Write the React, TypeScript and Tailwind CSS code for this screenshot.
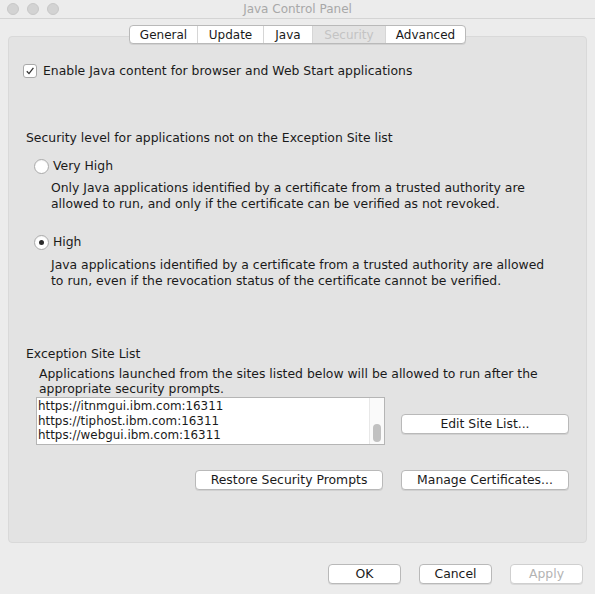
const TABS = [
  { label: 'General', w: 'w-[67px]' },
  { label: 'Update', w: 'w-[66px]' },
  { label: 'Java', w: 'w-[49px]' },
  { label: 'Security', w: 'w-[73px]', active: true },
  { label: 'Advanced', w: 'w-[80px]' },
];

const SITES = [
  'https://itnmgui.ibm.com:16311',
  'https://tiphost.ibm.com:16311',
  'https://webgui.ibm.com:16311',
];

function Button({ label, w, disabled }: { label: string; w: string; disabled?: boolean }) {
  return (
    <div
      className={`${w} h-[20px] rounded-[4px] border border-[#b9b9b9] bg-white shadow-[0_1px_0_rgba(0,0,0,0.08)] flex items-center justify-center text-[12.4px] leading-none ${
        disabled ? 'text-[#b3b3b3] border-[#cfcfcf]' : 'text-[#1a1a1a]'
      }`}
    >
      {label}
    </div>
  );
}

function Radio({ checked }: { checked?: boolean }) {
  return (
    <div className="w-[15px] h-[15px] rounded-full border border-[#a9a9a9] bg-white flex items-center justify-center shadow-[inset_0_1px_1px_rgba(0,0,0,0.05)]">
      {checked && <div className="w-[5px] h-[5px] rounded-full bg-[#2b2b2b]" />}
    </div>
  );
}

export default function App() {
  return (
    <div className="w-[595px] h-[594px] bg-[#ececec] flex flex-col text-[#1a1a1a] font-['DejaVu_Sans',sans-serif] text-[12.4px] overflow-hidden">
      {/* Title bar */}
      <div className="h-[19px] border-b border-[#d4d4d4] grid grid-cols-[1fr_auto_1fr] items-center">
        <div className="flex gap-[8px] pl-[7px]">
          <div className="w-[12px] h-[12px] rounded-full bg-[#d3d3d3] border border-[#c8c8c8]" />
          <div className="w-[12px] h-[12px] rounded-full bg-[#d3d3d3] border border-[#c8c8c8]" />
          <div className="w-[12px] h-[12px] rounded-full bg-[#d3d3d3] border border-[#c8c8c8]" />
        </div>
        <div className="text-[#a8a8a8] text-[12px] leading-none">Java Control Panel</div>
        <div />
      </div>

      <div className="px-[8px] pt-[6px] flex flex-col">
        {/* Tabs */}
        <div className="relative z-10 flex justify-center">
          <div className="flex h-[19px] rounded-[4px] border border-[#b9b9b9] bg-white overflow-hidden shadow-[0_1px_0_rgba(0,0,0,0.08)]">
            {TABS.map((t, i) => (
              <div
                key={t.label}
                className={`${t.w} flex items-center justify-center text-[12px] leading-none ${
                  i > 0 ? 'border-l border-[#d6d6d6]' : ''
                } ${t.active ? 'bg-[#e3e3e3] text-[#c4c4c4]' : 'text-[#1a1a1a]'}`}
              >
                {t.label}
              </div>
            ))}
          </div>
        </div>

        {/* Panel */}
        <div className="-mt-[8px] h-[507px] rounded-[4px] bg-[#e3e3e3] border border-[#d9d9d9] flex flex-col">
          <div className="mt-[26px] ml-[14px] flex items-center h-[16px]">
            <div className="w-[14px] h-[14px] rounded-[3px] border border-[#a9a9a9] bg-white flex items-center justify-center">
              <svg width="10" height="10" viewBox="0 0 10 10">
                <path d="M1.8 5.2 L4 7.6 L8.4 1.8" fill="none" stroke="#333" strokeWidth="1.3" />
              </svg>
            </div>
            <span className="ml-[6px] leading-[16px]">Enable Java content for browser and Web Start applications</span>
          </div>

          <div className="mt-[51px] ml-[17px] leading-[16px]">
            Security level for applications not on the Exception Site list
          </div>

          <div className="mt-[12px] ml-[25px] flex items-center h-[16px]">
            <Radio />
            <span className="ml-[4px] leading-[16px]">Very High</span>
          </div>
          <div className="mt-[6px] ml-[42px] leading-[16px]">
            <div>Only Java applications identified by a certificate from a trusted authority are</div>
            <div>allowed to run, and only if the certificate can be verified as not revoked.</div>
          </div>

          <div className="mt-[22px] ml-[25px] flex items-center h-[16px]">
            <Radio checked />
            <span className="ml-[4px] leading-[16px]">High</span>
          </div>
          <div className="mt-[7px] ml-[42px] leading-[16px]">
            <div>Java applications identified by a certificate from a trusted authority are allowed</div>
            <div>to run, even if the revocation status of the certificate cannot be verified.</div>
          </div>

          <div className="mt-[57px] ml-[17px] leading-[16px]">Exception Site List</div>
          <div className="mt-[4px] ml-[30px] leading-[15px]">
            <div>Applications launched from the sites listed below will be allowed to run after the</div>
            <div>appropriate security prompts.</div>
          </div>

          <div className="mt-[1px] ml-[27px] flex items-start">
            <div className="w-[349px] h-[48px] bg-white border border-[#b5b5b5] flex">
              <div className="flex-1 pl-[1px] pt-[1px] text-[11.9px] leading-[14.5px]">
                {SITES.map((s) => (
                  <div key={s}>{s}</div>
                ))}
              </div>
              <div className="w-[15px] border-l border-[#e8e8e8] bg-[#fafafa] flex flex-col justify-end items-center pb-[2px]">
                <div className="w-[8px] h-[18px] rounded-full bg-[#c1c1c1]" />
              </div>
            </div>
            <div className="ml-[16px] mt-[17px]">
              <Button label="Edit Site List..." w="w-[168px]" />
            </div>
          </div>

          <div className="mt-[25px] flex justify-end gap-[18px] pr-[17px]">
            <Button label="Restore Security Prompts" w="w-[188px]" />
            <Button label="Manage Certificates..." w="w-[168px]" />
          </div>
        </div>

        <div className="mt-[21px] flex justify-end gap-[18px] pr-[4px]">
          <Button label="OK" w="w-[73px]" />
          <Button label="Cancel" w="w-[73px]" />
          <Button label="Apply" w="w-[73px]" disabled />
        </div>
      </div>
    </div>
  );
}
